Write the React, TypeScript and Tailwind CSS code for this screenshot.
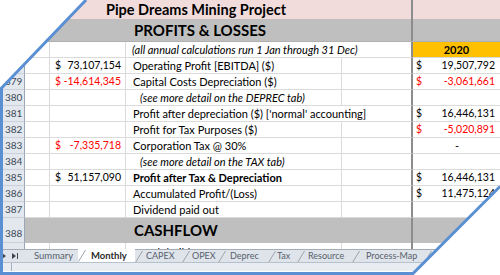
import type { ReactNode } from 'react';

type Amount = { value: string; red?: boolean };

type RowProps = {
  n: number;
  c?: Amount;
  label?: ReactNode;
  labelClass?: string;
  spill?: boolean; // label runs over into column E
  f?: ReactNode;
};

const Money = ({ value, red = false }: Amount) => (
  <div className={`flex justify-between text-[10.5px] ${red ? 'text-[#ff0000]' : 'text-black'}`}>
    <span>$</span>
    <span>{value}</span>
  </div>
);

const RowHead = ({ n, className = '' }: { n: number; className?: string }) => (
  <div
    className={`w-[25px] shrink-0 bg-[#e3e8ee] border-b border-r border-b-[#c9d0d9] border-r-[#9ba7b5] pl-[5px] text-[#3b4856] text-[10px] ${className}`}
  >
    {n}
  </div>
);

const DataRow = ({ n, c, label, labelClass = '', spill = false, f }: RowProps) => (
  <div className="flex h-[16px] leading-[15px] text-[11px]">
    <RowHead n={n} />
    <div className="w-[25px] shrink-0 border-r border-b border-[#dadada]" />
    <div className="w-[76px] shrink-0 border-r border-b border-[#dadada] pl-[5px] pr-[4px]">
      {c && <Money {...c} />}
    </div>
    {spill ? (
      <div
        className={`w-[287px] shrink-0 border-b border-r-2 border-b-[#dadada] border-r-[#8c8c8c] whitespace-nowrap ${labelClass}`}
      >
        {label}
      </div>
    ) : (
      <>
        <div
          className={`w-[216px] shrink-0 border-r border-b border-[#dadada] whitespace-nowrap ${labelClass}`}
        >
          {label}
        </div>
        <div className="w-[71px] shrink-0 border-b border-r-2 border-b-[#dadada] border-r-[#8c8c8c]" />
      </>
    )}
    <div className="w-[87px] shrink-0 border-b border-[#dadada] pl-[3px] pr-[5px] whitespace-nowrap">
      {f}
    </div>
  </div>
);

const TabSep = () => (
  <svg width="8" height="13" viewBox="0 0 8 13" className="shrink-0">
    <line x1="0.5" y1="12.5" x2="7.5" y2="1" stroke="#9aa3ad" strokeWidth="1" />
  </svg>
);

const tabs = [
  { name: 'CAPEX', w: 'w-[47px]', pl: 'pl-[3px]' },
  { name: 'OPEX', w: 'w-[36px]', pl: 'pl-[2px]' },
  { name: 'Deprec', w: 'w-[50px]', pl: 'pl-[4px]' },
  { name: 'Tax', w: 'w-[29px]', pl: 'pl-[1px]' },
  { name: 'Resource', w: 'w-[55px]', pl: 'pl-[3px]' },
  { name: 'Process-Map', w: 'w-[72px]', pl: 'pl-[6px]' },
];

export default function App() {
  return (
    <div className="w-[500px] h-[275px] relative bg-white overflow-hidden font-['Lato',sans-serif] text-black">
      <div className="h-full flex flex-col [clip-path:polygon(86px_0,500px_0,500px_188px,413px_275px,0_275px,0_88px)]">
        {/* title */}
        <div className="flex h-[19px] shrink-0 bg-[#f2dcdb]">
          <div className="w-[50px] shrink-0" />
          <div className="w-[292px] shrink-0 text-center font-bold text-[14.5px] leading-[19px]">
            Pipe Dreams Mining Project
          </div>
          <div className="w-[71px] shrink-0 border-r-2 border-r-[#8c8c8c]" />
          <div className="w-[87px] shrink-0" />
        </div>
        <div className="flex h-[23px] shrink-0 bg-[#bfbfbf] border-b border-b-[#b0b0b0]">
          <div className="w-[126px] shrink-0" />
          <div className="w-[216px] shrink-0 pl-[8px] font-bold text-[15px] leading-[23px]">
            PROFITS &amp; LOSSES
          </div>
          <div className="w-[71px] shrink-0 border-r-2 border-r-[#8c8c8c]" />
          <div className="w-[87px] shrink-0" />
        </div>

        <div className="flex h-[16px] leading-[15px] text-[11px]">
          <RowHead n={377} />
          <div className="w-[25px] shrink-0 border-r border-b border-[#dadada]" />
          <div className="w-[76px] shrink-0 border-r border-b border-[#dadada]" />
          <div className="w-[287px] shrink-0 border-b border-r-2 border-b-[#dadada] border-r-[#8c8c8c] whitespace-nowrap italic pl-[6px]">
            (all annual calculations run 1 Jan through 31 Dec)
          </div>
          <div className="w-[87px] shrink-0 bg-[#ffc000] text-center font-bold border-b border-b-[#dadada]">
            2020
          </div>
        </div>
        <DataRow
          n={378}
          c={{ value: '73,107,154' }}
          label="Operating Profit [EBITDA] ($)"
          labelClass="pl-[7px]"
          f={<Money value="19,507,792" />}
        />
        <DataRow
          n={379}
          c={{ value: '-14,614,345', red: true }}
          label="Capital Costs Depreciation ($)"
          labelClass="pl-[7px]"
          f={<Money value="-3,061,661" red />}
        />
        <DataRow n={380} label="(see more detail on the DEPREC tab)" labelClass="pl-[14px] italic" />
        <DataRow
          n={381}
          label="Profit after depreciation ($) ['normal' accounting]"
          labelClass="pl-[7px]"
          spill
          f={<Money value="16,446,131" />}
        />
        <DataRow
          n={382}
          label="Profit for Tax Purposes ($)"
          labelClass="pl-[7px]"
          f={<Money value="-5,020,891" red />}
        />
        <DataRow
          n={383}
          c={{ value: '-7,335,718', red: true }}
          label="Corporation Tax @ 30%"
          labelClass="pl-[7px]"
          f={<div className="text-right pr-[36px]">-</div>}
        />
        <DataRow n={384} label="(see more detail on the TAX tab)" labelClass="pl-[14px] italic" />
        <DataRow
          n={385}
          c={{ value: '51,157,090' }}
          label="Profit after Tax & Depreciation"
          labelClass="pl-[7px] font-bold"
          f={<Money value="16,446,131" />}
        />
        <DataRow
          n={386}
          label="Accumulated Profit/(Loss)"
          labelClass="pl-[7px]"
          f={<Money value="11,475,124" />}
        />
        <DataRow n={387} label="Dividend paid out" labelClass="pl-[7px]" />

        {/* cashflow header */}
        <div className="flex h-[25px] shrink-0">
          <RowHead n={388} className="flex items-end pb-[4px] leading-none" />
          <div className="w-[388px] shrink-0 bg-[#bfbfbf] border-r-2 border-r-[#8c8c8c] pl-[109px] font-bold text-[15px] leading-[25px]">
            CASHFLOW
          </div>
          <div className="w-[87px] shrink-0 bg-[#bfbfbf]" />
        </div>
        <div className="flex h-[6px] shrink-0 overflow-hidden text-[11px] leading-[16px]">
          <RowHead n={389} className="border-b-0 pt-[1px] h-[6px] overflow-hidden" />
          <div className="w-[25px] shrink-0 border-r border-[#dadada]" />
          <div className="w-[76px] shrink-0 border-r border-[#dadada]" />
          <div className="w-[216px] h-[6px] shrink-0 overflow-hidden border-r border-[#dadada] pl-[14px] pt-[2px] whitespace-nowrap">
            Cash build-up
          </div>
          <div className="w-[71px] shrink-0 border-r-2 border-r-[#8c8c8c]" />
          <div className="w-[87px] shrink-0" />
        </div>

        {/* sheet tabs */}
        <div className="flex h-[13px] shrink-0 bg-[#dfe4ea] border-t border-t-[#a3acb7] text-[9px] leading-[12px] text-[#56606c] whitespace-nowrap">
          <div className="w-[26px] shrink-0 flex items-center gap-[6px] pl-[2px]">
            <svg width="4" height="6" viewBox="0 0 4 6">
              <path d="M0 0 L4 3 L0 6 Z" fill="#3b4856" />
            </svg>
            <svg width="6" height="6" viewBox="0 0 6 6">
              <path d="M0 0 L4 3 L0 6 Z" fill="#3b4856" />
              <rect x="5" y="0" width="1" height="6" fill="#3b4856" />
            </svg>
          </div>
          <div className="w-[52px] shrink-0 pl-[8px] text-[9.5px]">Summary</div>
          <div className="w-[57px] shrink-0 flex bg-white -mt-px">
            <TabSep />
            <span className="pl-[5px] font-bold text-[9.5px] text-[#2c2c2c] pt-px">Monthly</span>
          </div>
          {tabs.map((t) => (
            <div key={t.name} className={`${t.w} shrink-0 flex`}>
              <TabSep />
              <span className={t.pl}>{t.name}</span>
            </div>
          ))}
          <TabSep />
          <div className="flex-1 bg-[#e6eaef]" />
        </div>
        <div className="flex h-[9px] shrink-0 bg-[#e9edf2] border-t border-t-[#b6c1ce]">
          <div className="w-[12px] shrink-0 border-r border-r-[#a9b4c1]" />
        </div>
        <div className="flex-1" />
      </div>
      <svg className="absolute inset-0 pointer-events-none" width="500" height="275" viewBox="0 0 500 275">
        <polyline
          points="86,0 1.5,88 1.5,273.5 413,273.5 500,186.5"
          fill="none"
          stroke="#5a8fd3"
          strokeWidth="3"
        />
      </svg>
    </div>
  );
}
